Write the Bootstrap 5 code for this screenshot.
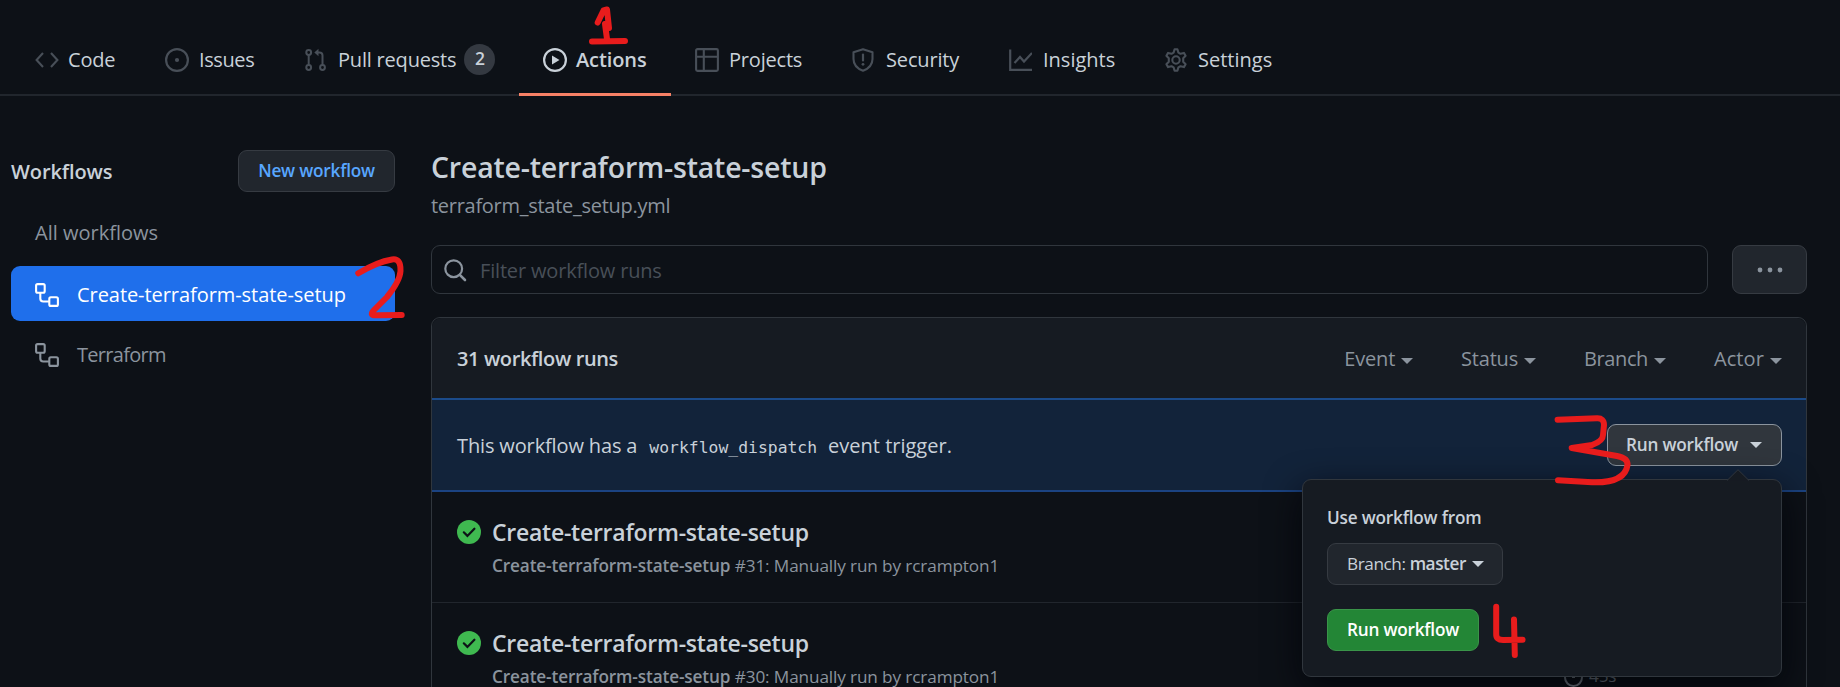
<!DOCTYPE html>
<html lang="en" data-bs-theme="dark">
<head>
<meta charset="utf-8">
<meta name="viewport" content="width=device-width, initial-scale=1">
<title>Actions · Create-terraform-state-setup</title>
<link href="https://cdn.jsdelivr.net/npm/bootstrap@5.3.0/dist/css/bootstrap.min.css" rel="stylesheet">
<style>
body{background:#0d1117;color:#c9d1d9;font-family:"Open Sans","Noto Sans",sans-serif;font-size:20px;line-height:30px;height:687px;overflow:hidden;letter-spacing:-.2px;white-space:nowrap}
svg{flex:none;display:block}
.ico{width:24px;height:24px;fill:none;stroke:currentColor;stroke-width:1.5}
.fw-semi{font-weight:600}
.repo-nav{height:96px;padding-left:11px;border-bottom:2px solid #21262d}
.repo-nav .nav-link{height:72px;margin-top:24px;padding:0 0 1px 24px;color:#c9d1d9;gap:10px;border-radius:0}
.repo-nav .nav-link svg{color:#484f58}
.repo-nav .nav-link.active{color:#c9d1d9;font-weight:600;border-bottom:3px solid #f78166;padding:2px 0 0 24px;gap:9px;letter-spacing:-.1px}
.repo-nav .nav-link.active svg{color:#c9d1d9}
.t-code{width:130px}.t-issues{width:139px}.t-pulls{width:239px}.t-actions{width:152px}.t-projects{width:156px}.t-security{width:157px}.t-insights{width:155px}
.repo-nav .t-code{gap:9px}
.repo-nav .t-issues{letter-spacing:-.4px}
.repo-nav .t-security,.repo-nav .t-insights,.repo-nav .t-settings{gap:11px;letter-spacing:0}
.repo-nav .t-security{letter-spacing:-.15px}
.repo-nav .count{min-width:31px;height:31px;line-height:29px;padding:0;font-size:17.5px;font-weight:600;background:#343941;color:#c9d1d9;margin-left:-2px;margin-top:-1px}
.layout{padding:54px 33px 0 11px;gap:36px}
.side{width:384px}
.side-head{margin-bottom:13px}
.s-wf{letter-spacing:-.1px;padding-top:1px}
.gbtn{height:42px;padding:0 19px;font-size:17.2px;font-weight:600;line-height:40px;border:1px solid #363b42;border-radius:9px;background:#21262d;color:#c9d1d9;letter-spacing:-.2px}
.gbtn:hover{background:#30363d;color:#c9d1d9}
.side .new-btn{color:#58a6ff;width:157px;padding:0}
.side .nav-link{height:55px;border-radius:9px;padding:1px 24px 0;color:#8b949e;margin-bottom:6px;gap:18px}
.side .nav-link.active{background:#1f6feb;color:#fff;padding-top:2px}
.s-all{letter-spacing:0;margin-top:-1px}
.s-create{letter-spacing:-.06px}
.s-tf{letter-spacing:-.7px}
.main h1{font-size:28.5px;line-height:34px;font-weight:600;margin:0;color:#c9d1d9}
.file{color:#8b949e;line-height:30px;margin:7px 0 24px;letter-spacing:-.28px}
.filter-row{gap:24px}
.filter{height:49px;border:1px solid #30363d;border-radius:9px;padding:0 12px 0 11px;color:#8b949e;gap:13px}
.filter input{background:none!important;border:0;box-shadow:none!important;color:#c9d1d9;padding:2px 0 0;font-size:20px;height:45px;letter-spacing:-.17px}
.filter input::placeholder{color:#484f58;opacity:1}
.more{width:75px;height:49px;padding:0;color:#8b949e}
.runs{margin-top:23px;height:400px;border:1px solid #30363d;border-radius:9px 9px 0 0;background:#0d1117}
.runs-head{height:80px;background:#161b22;border-radius:9px 9px 0 0;padding:2px 24px 0 25px;color:#8b949e}
.runs-head strong{color:#c9d1d9;letter-spacing:-.38px}
.filters{gap:48px}
.filters .dd:last-child{letter-spacing:.1px}
.filters .dd:nth-child(3){letter-spacing:-.4px}
.tri{display:inline-block;width:0;height:0;border:6px solid transparent;border-top-color:currentColor;border-bottom:0}
.filters .tri{margin-top:4px}
.dd{gap:6px}
.dispatch{height:94px;background:#12233a;border-top:2px solid #1b4b8a;border-bottom:2px solid #1b4382;padding:0 24px 0 25px}
.dispatch code{font-family:"DejaVu Sans Mono",monospace;font-size:16.4px;color:#c9d1d9;padding:0 11px 0 12px;letter-spacing:0}
.s-this{letter-spacing:-.14px}
.s-trig{letter-spacing:0}
.gbtn.open{background:#30363d;border-color:#8b949e;width:175px;padding-left:18px}
.run{height:111px;border-bottom:1px solid #21262d;padding:24px 24px 0 25px;gap:11px}
.run .ok{margin-top:4px}
.run h3{font-size:23px;line-height:33px;font-weight:600;margin:0;color:#c9d1d9;letter-spacing:-.25px}
.run p{font-size:17.2px;line-height:27px;color:#8b949e;margin:3px 0 0;letter-spacing:-.13px}
.time{left:1131px;top:61px;font-size:17.2px;line-height:24px;color:#8b949e;gap:5px}
.pop{left:870px;top:79px;width:480px;height:198px;background:#161b22;border:1px solid #30363d;border-radius:9px;box-shadow:0 12px 36px rgba(1,4,9,.85);padding:24px;z-index:5}
.pop-arrow{right:31px;top:-11px}
.pop .lbl{font-size:17.2px;font-weight:600;line-height:28px;margin-bottom:11px}
.pop .br-btn{width:176px;letter-spacing:-.42px}
.pop .go{background:#238636;border-color:#3a9449;color:#fff;width:152px;padding:0;margin-top:24px}
.marks{left:0;top:0;z-index:10;pointer-events:none;fill:none;stroke:#e81c1c;stroke-width:6;stroke-linecap:round;stroke-linejoin:round}
</style>
</head>
<body>
<nav class="repo-nav nav flex-nowrap">
  <a class="nav-link d-flex align-items-center t-code" href="#"><svg class="ico" viewBox="0 0 24 24"><path d="M8 5 1.6 12 8 19M16 5l6.400 7L16 19" stroke-width="2.1"/></svg><span>Code</span></a>
  <a class="nav-link d-flex align-items-center t-issues" href="#"><svg class="ico" viewBox="0 0 24 24"><circle cx="12" cy="12" r="10.9" stroke-width="2.2"/><circle cx="12" cy="12" r="2.1" fill="currentColor" stroke="none"/></svg><span>Issues</span></a>
  <a class="nav-link d-flex align-items-center t-pulls" href="#"><svg class="ico" viewBox="0 0 24 24"><g stroke-width="2"><circle cx="4.700" cy="4.500" r="2.400"/><circle cx="4.700" cy="19.500" r="2.400"/><circle cx="18.500" cy="19.500" r="2.400"/><path d="M4.700 7v10M18.500 17V7.500a3 3 0 0 0-3-3h-3"/></g><path d="M14.500 .8v7.400L10.300 4.500z" fill="currentColor" stroke="none"/></svg><span>Pull requests</span><span class="badge rounded-pill count">2</span></a>
  <a class="nav-link active d-flex align-items-center t-actions" href="#"><svg class="ico" viewBox="0 0 24 24"><circle cx="12" cy="12" r="10.900" stroke-width="2.200"/><path d="M9 7.500v9l7.500-4.500z" fill="currentColor" stroke="none"/></svg><span>Actions</span></a>
  <a class="nav-link d-flex align-items-center t-projects" href="#"><svg class="ico" viewBox="0 0 24 24"><path d="M2.500 1.100h19a1.400 1.400 0 0 1 1.400 1.400v19a1.400 1.400 0 0 1-1.400 1.400h-19a1.400 1.400 0 0 1-1.400-1.400v-19a1.400 1.400 0 0 1 1.400-1.400zM1 8.800h22M8.800 1v22" stroke-width="2.100"/></svg><span>Projects</span></a>
  <a class="nav-link d-flex align-items-center t-security" href="#"><svg class="ico" viewBox="0 0 24 24"><path d="M12 1.200 21.500 4.300V11c0 5.800-3.500 9.500-9.500 11.800C6 20.500 2.500 16.800 2.500 11V4.300z" stroke-width="2.100" stroke-linejoin="round"/><path d="M12 6.500v6" stroke-width="2.200" stroke-linecap="round"/><circle cx="12" cy="16.300" r="1.400" fill="currentColor" stroke="none"/></svg><span>Security</span></a>
  <a class="nav-link d-flex align-items-center t-insights" href="#"><svg class="ico" viewBox="0 0 24 24"><path d="M2.200 1.500v20.300H25" stroke-width="2.200"/><path d="M6.500 15l5.500-6 4 4.500 8-8.500" stroke-width="2.200"/></svg><span>Insights</span></a>
  <a class="nav-link d-flex align-items-center t-settings" href="#"><svg class="ico" viewBox="0 0 24 24"><circle cx="13" cy="12" r="3.700" stroke-width="2.100"/><path transform="translate(1 0)" d="M10.600 1.200h2.800l1 3.400 2.100 1.200 3.400-.9 1.700 2.900-2.400 2.500v3.400l2.400 2.500-1.700 2.900-3.400-.9-2.100 1.200-1 3.400h-2.800l-1-3.400-2.100-1.200-3.400.9-1.700-2.900 2.400-2.500v-3.400L2.400 7.800l1.700-2.900 3.400.9 2.100-1.200z" stroke-width="2.100" stroke-linejoin="round"/></svg><span>Settings</span></a>
</nav>

<div class="layout d-flex">
  <aside class="side flex-shrink-0">
    <div class="side-head d-flex justify-content-between align-items-center">
      <span class="fw-semi s-wf">Workflows</span>
      <button class="btn gbtn new-btn">New workflow</button>
    </div>
    <div class="nav flex-column flex-nowrap">
      <a class="nav-link d-flex align-items-center" href="#"><span class="s-all">All workflows</span></a>
      <a class="nav-link active d-flex align-items-center" href="#"><svg class="ico" viewBox="0 0 24 24"><g stroke-width="2.100"><rect x="1.100" y="1.100" width="8.600" height="8.600" rx="1.500"/><rect x="14.300" y="14.300" width="8.600" height="8.600" rx="1.500"/><path d="M5.300 10v5.500a3 3 0 0 0 3 3h6"/></g></svg><span class="s-create">Create-terraform-state-setup</span></a>
      <a class="nav-link d-flex align-items-center" href="#"><svg class="ico" viewBox="0 0 24 24"><g stroke-width="2.100"><rect x="1.100" y="1.100" width="8.600" height="8.600" rx="1.500"/><rect x="14.300" y="14.300" width="8.600" height="8.600" rx="1.500"/><path d="M5.300 10v5.500a3 3 0 0 0 3 3h6"/></g></svg><span class="s-tf">Terraform</span></a>
    </div>
  </aside>

  <main class="main flex-grow-1">
    <h1>Create-terraform-state-setup</h1>
    <div class="file">terraform_state_setup.yml</div>
    <div class="d-flex filter-row">
      <div class="filter d-flex align-items-center flex-grow-1">
        <svg class="ico" viewBox="0 0 24 24"><circle cx="10.700" cy="10.700" r="8.400" stroke-width="2.200"/><path d="M16.800 16.800l5.200 5.200" stroke-width="2.600" stroke-linecap="round"/></svg>
        <input class="form-control" type="text" placeholder="Filter workflow runs" aria-label="Filter workflow runs">
      </div>
      <button class="btn gbtn more d-flex align-items-center justify-content-center" aria-label="More"><svg width="26" height="6" viewBox="0 0 26 6" fill="currentColor"><circle cx="3" cy="3" r="2.400"/><circle cx="13" cy="3" r="2.400"/><circle cx="23" cy="3" r="2.400"/></svg></button>
    </div>

    <section class="runs">
      <div class="runs-head d-flex align-items-center">
        <strong class="fw-semi me-auto">31 workflow runs</strong>
        <div class="d-flex filters">
          <span class="dd d-flex align-items-center"><span>Event</span><i class="tri"></i></span>
          <span class="dd d-flex align-items-center"><span>Status</span><i class="tri"></i></span>
          <span class="dd d-flex align-items-center"><span>Branch</span><i class="tri"></i></span>
          <span class="dd d-flex align-items-center"><span>Actor</span><i class="tri"></i></span>
        </div>
      </div>
      <div class="dispatch d-flex align-items-center justify-content-between position-relative">
        <div class="d-flex align-items-baseline pt-1"><span class="s-this">This workflow has a</span><code>workflow_dispatch</code><span class="s-trig">event trigger.</span></div>
        <button class="btn gbtn open d-flex align-items-center justify-content-between"><span>Run workflow</span><i class="tri"></i></button>
        <div class="pop position-absolute">
          <svg class="pop-arrow position-absolute" width="24" height="12" viewBox="0 0 24 12"><path d="M1 11.500 12 .7 23 11.500" fill="#161b22" stroke="#30363d"/></svg>
          <div class="lbl"><span>Use workflow from</span></div>
          <button class="btn gbtn d-flex align-items-center dd br-btn"><span class="fw-normal">Branch: <b class="fw-semi">master</b></span><i class="tri"></i></button>
          <button class="btn gbtn go">Run workflow</button>
        </div>
      </div>
      <div class="run d-flex">
        <svg width="24" height="24" viewBox="0 0 24 24" class="ok"><circle cx="12" cy="12" r="12" fill="#3fb950"/><path d="M6.800 12.300l3.600 3.600 7-7.200" fill="none" stroke="#0d1117" stroke-width="2.200" stroke-linecap="round"/></svg>
        <div><h3>Create-terraform-state-setup</h3><p><b class="fw-semi">Create-terraform-state-setup</b> <span>#31: Manually run by rcrampton1</span></p></div>
      </div>
      <div class="run d-flex position-relative border-0">
        <svg width="24" height="24" viewBox="0 0 24 24" class="ok"><circle cx="12" cy="12" r="12" fill="#3fb950"/><path d="M6.800 12.300l3.600 3.600 7-7.200" fill="none" stroke="#0d1117" stroke-width="2.200" stroke-linecap="round"/></svg>
        <div><h3>Create-terraform-state-setup</h3><p><b class="fw-semi">Create-terraform-state-setup</b> <span>#30: Manually run by rcrampton1</span></p></div>
        <div class="time position-absolute d-flex align-items-center"><svg width="21" height="21" viewBox="0 0 21 21" fill="none" stroke="currentColor" stroke-width="2"><circle cx="10.500" cy="11.500" r="8.500"/><path d="M10.500 12V6.500M8 1.500h5" stroke-width="3"/></svg><span>45s</span></div>
      </div>
    </section>
  </main>
</div>

<svg class="marks position-absolute" width="1840" height="687" viewBox="0 0 1840 687">
  <path d="M597.700 22.500 603.500 10.500 607 9.500 609 28M605 24 607 39M592 41.500 625 41"/>
  <path d="M358.300 273.300Q377 262 392 259.500 401 258 400.500 271 400 281 387 297L374 310Q368 316 378 315.300L401.700 315"/>
  <path d="M1557.600 419.700 1597 418.300Q1604 418 1604 425L1603 435Q1603 441 1592 445L1571.700 448 1617 456Q1628 458 1627.500 465C1626 476 1617 483 1592 482.300L1558 480.300"/>
  <path d="M1496.200 606.700V634Q1496 640 1503 640L1522.600 639.700M1514 619.500 1514.800 655"/>
</svg>
<script src="https://cdn.jsdelivr.net/npm/bootstrap@5.3.0/dist/js/bootstrap.bundle.min.js"></script>
</body>
</html>
